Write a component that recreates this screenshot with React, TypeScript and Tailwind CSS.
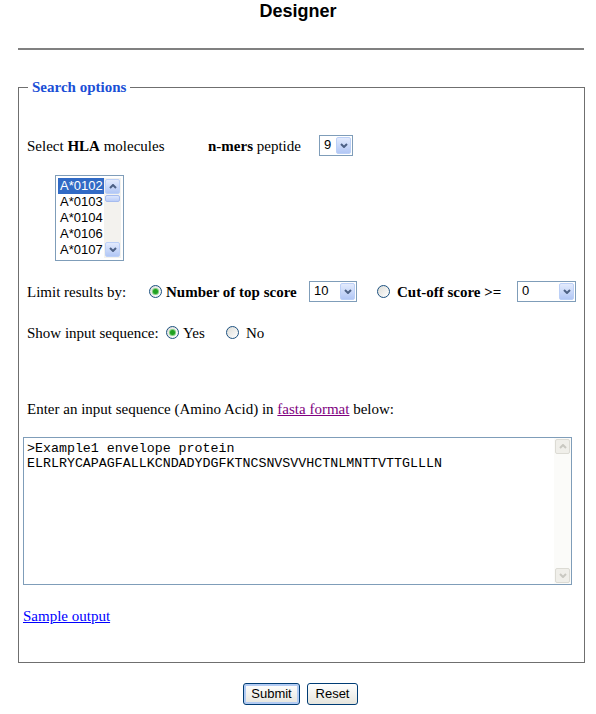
import type { ReactNode } from 'react'

const chevron = (up: boolean, color: string) => (
  <svg width="8" height="5" viewBox="0 0 8 5" fill="none">
    <path d={up ? 'M1 4 L4 1 L7 4' : 'M1 1 L4 4 L7 1'} stroke={color} strokeWidth="2" />
  </svg>
)

function Dropdown({ value, className }: { value: string; className: string }) {
  return (
    <div className={`flex h-[21px] shrink-0 border border-[#7f9db9] bg-white ${className}`}>
      <span className="flex-1 pl-[4px] font-['Liberation_Sans',Arial,sans-serif] text-[13px] leading-[18px]">{value}</span>
      <span className="m-px flex w-[15px] items-center justify-center rounded-[2px] border border-[#bcd0f7] bg-gradient-to-b from-[#e3ebfd] to-[#b2c7f5]">
        {chevron(false, '#4d6185')}
      </span>
    </div>
  )
}

function Radio({ checked }: { checked?: boolean }) {
  return (
    <span className="flex h-[13px] w-[13px] shrink-0 items-center justify-center rounded-full border border-[#1c5180] bg-gradient-to-br from-[#dcdcd7] to-white">
      {checked && <span className="h-[5px] w-[5px] rounded-full bg-[#21a121] shadow-[0_0_0_1px_#7fd07f]" />}
    </span>
  )
}

function Row({ children, className = '' }: { children: ReactNode; className?: string }) {
  return <div className={`flex h-[21px] items-center whitespace-nowrap ${className}`}>{children}</div>
}

const alleles = ['A*0102', 'A*0103', 'A*0104', 'A*0106', 'A*0107']

export default function App() {
  return (
    <div className="min-h-[714px] bg-white font-['Liberation_Serif','Times_New_Roman',serif] text-[15px] text-black">
      <h1 className="pt-[1px] text-center font-['Liberation_Sans',Arial,sans-serif] text-[18px] leading-[21px] font-bold">Designer</h1>
      <div className="mt-[26px] ml-[18px] h-[2px] w-[566px] bg-[#808080]" />

      <fieldset className="mt-[28px] ml-[18px] w-[566px] border border-[#6f6f6f] px-[8px] pb-[36px]">
        <legend className="ml-[1px] px-[4px] text-[15px] leading-[18px] font-bold text-[#1a4fd6]">Search options</legend>

        <Row className="mt-[39px]">
          <span className="w-[181px] pt-[2px]">
            Select <b>HLA</b> molecules
          </span>
          <span className="w-[111px] pt-[2px]">
            <b>n-mers</b> peptide
          </span>
          <Dropdown value="9" className="w-[34px]" />
        </Row>

        {/* allele list box */}
        <div className="mt-[19px] ml-[28px] flex h-[86px] w-[69px] border border-[#7f9db9] bg-white p-[2px]">
          <div className="w-[46px] font-['Liberation_Sans',Arial,sans-serif] text-[13px] leading-[16px]">
            {alleles.map((a, i) => (
              <div key={a} className={`pl-[2px] ${i === 0 ? 'bg-[#316ac5] text-white' : ''}`}>
                {a}
              </div>
            ))}
          </div>
          <div className="flex w-[17px] flex-col bg-[#f3f2ee]">
            <span className="m-px flex h-[15px] items-center justify-center rounded-[2px] border border-[#bcd0f7] bg-gradient-to-b from-[#e3ebfd] to-[#b2c7f5]">
              {chevron(true, '#4d6185')}
            </span>
            <span className="mx-px h-[7px] rounded-[2px] border border-[#a6bcef] bg-gradient-to-b from-[#dbe5fd] to-[#bacdf7]" />
            <span className="flex-1" />
            <span className="m-px flex h-[15px] items-center justify-center rounded-[2px] border border-[#bcd0f7] bg-gradient-to-b from-[#e3ebfd] to-[#b2c7f5]">
              {chevron(false, '#4d6185')}
            </span>
          </div>
        </div>

        <Row className="mt-[20px]">
          <span className="w-[122px] pt-[2px]">Limit results by:</span>
          <Radio checked />
          <b className="ml-[4px] w-[143px] pt-[2px]">Number of top score</b>
          <Dropdown value="10" className="w-[48px]" />
          <span className="ml-[20px]">
            <Radio />
          </span>
          <b className="ml-[7px] w-[120px] pt-[2px]">Cut-off score &gt;=</b>
          <Dropdown value="0" className="w-[59px]" />
        </Row>

        <Row className="mt-[20px]">
          <span className="w-[139px] pt-[2px]">Show input sequence:</span>
          <Radio checked />
          <span className="ml-[4px] w-[43px] pt-[2px]">Yes</span>
          <Radio />
          <span className="ml-[7px] pt-[2px]">No</span>
        </Row>

        <Row className="mt-[55px]">
          <span className="pt-[2px]">
            Enter an input sequence (Amino Acid) in{' '}
            <a href="#" className="text-[#800080] underline">
              fasta format
            </a>{' '}
            below:
          </span>
        </Row>

        {/* sequence box */}
        <div className="mt-[18px] -ml-[4px] flex h-[148px] w-[549px] border border-[#7f9db9] bg-white">
          <div className="flex-1 pt-[3px] pl-[3px] font-['Liberation_Mono','Courier_New',monospace] text-[13.3px] leading-[15px] whitespace-pre">
            {'>Example1 envelope protein\nELRLRYCAPAGFALLKCNDADYDGFKTNCSNVSVVHCTNLMNTTVTTGLLLN'}
          </div>
          <div className="flex w-[17px] flex-col bg-[#fbfbf9]">
            <span className="m-px flex h-[15px] items-center justify-center rounded-[2px] border border-[#dcdbd4] bg-[#f0efea]">
              {chevron(true, '#c9c8c1')}
            </span>
            <span className="flex-1" />
            <span className="m-px flex h-[15px] items-center justify-center rounded-[2px] border border-[#dcdbd4] bg-[#f0efea]">
              {chevron(false, '#c9c8c1')}
            </span>
          </div>
        </div>

        <Row className="mt-[20px]">
          <a href="#" className="-ml-[4px] pt-[2px] text-[#0000ff] underline">
            Sample output
          </a>
        </Row>
      </fieldset>

      <div className="mt-[20px] flex justify-center gap-[7px] pl-[5px] font-['Liberation_Sans',Arial,sans-serif] text-[13px]">
        <button className="h-[22px] w-[57px] rounded-[3px] border border-[#003c74] bg-gradient-to-b from-white to-[#e6e5dd] shadow-[inset_0_0_0_2px_#b2cbf3]">
          Submit
        </button>
        <button className="h-[22px] w-[51px] rounded-[3px] border border-[#003c74] bg-gradient-to-b from-white to-[#e6e5dd]">
          Reset
        </button>
      </div>
    </div>
  )
}
